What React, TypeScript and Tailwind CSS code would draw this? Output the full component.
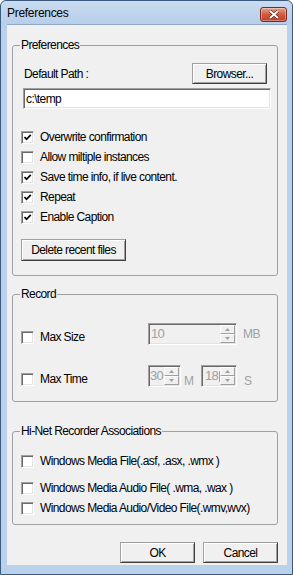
import type { ReactNode } from "react";

function CheckBox({ checked }: { checked?: boolean }) {
  return (
    <span className="w-[13px] h-[13px] shrink-0 flex items-center justify-center bg-white border border-t-[#a0a0a0] border-l-[#a0a0a0] border-r-white border-b-white shadow-[inset_1px_1px_0_#696969,inset_-1px_-1px_0_#e3e3e3]">
      {checked && (
        <svg width="9" height="9" viewBox="0 0 9 9">
          <path d="M1.5 4 L3.5 6.3 L7.8 1.8" stroke="#000" strokeWidth="1.7" fill="none" />
        </svg>
      )}
    </span>
  );
}

function CheckRow({ label, checked, className = "" }: { label: string; checked?: boolean; className?: string }) {
  return (
    <div className={`h-[20px] ml-[8px] flex items-center gap-[6px] ${className}`}>
      <CheckBox checked={checked} />
      <span className="leading-[14px]">{label}</span>
    </div>
  );
}

function Button({ className = "", children }: { className?: string; children: ReactNode }) {
  return (
    <button
      className={`flex items-center justify-center bg-[#f0f0f0] border border-t-[#a0a0a0] border-l-[#a0a0a0] border-r-[#404040] border-b-[#404040] shadow-[inset_1px_1px_0_#fff,inset_-1px_-1px_0_#a0a0a0] leading-[14px] text-black ${className}`}
    >
      {children}
    </button>
  );
}

function SpinArrow({ up }: { up?: boolean }) {
  return (
    <div className="h-[9px] flex items-center justify-center bg-[#f0f0f0] border border-t-white border-l-white border-r-[#a0a0a0] border-b-[#a0a0a0]">
      <svg width="5" height="3" viewBox="0 0 5 3">
        <path d={up ? "M2.5 0 L5 3 L0 3 Z" : "M0 0 L5 0 L2.5 3 Z"} fill="#a0a0a0" />
      </svg>
    </div>
  );
}

function Spin({ className, children }: { className: string; children: ReactNode }) {
  return (
    <div
      className={`h-[22px] flex p-[1px] bg-[#f0f0f0] border border-t-[#a0a0a0] border-l-[#a0a0a0] border-r-white border-b-white shadow-[inset_1px_1px_0_#696969,inset_-1px_-1px_0_#e3e3e3] ${className}`}
    >
      <div className="flex-1 flex items-center text-[13px] leading-[18px] tracking-[-0.8px] text-[#a0a0a0] overflow-hidden">{children}</div>
      <div className="w-[15px] flex flex-col">
        <SpinArrow up />
        <SpinArrow />
      </div>
    </div>
  );
}

function Group({ title, className = "", children }: { title: string; className?: string; children: ReactNode }) {
  return (
    <fieldset className={`w-[266px] border border-[#a0a0a0] rounded-[3px] ${className}`}>
      <legend className="ml-[7px] px-[1px] leading-[14px]">{title}</legend>
      {children}
    </fieldset>
  );
}

export default function App() {
  return (
    <div className="w-[293px] h-[575px] flex flex-col bg-[#b9d1ea] border border-[#3a5a80] rounded-t-[6px] font-['Liberation_Sans',Arial,sans-serif] text-[12px] tracking-[-0.6px] text-black">
      <div className="h-[23px] shrink-0 flex justify-between pl-[6px] pr-[5px] rounded-t-[6px] bg-linear-to-b from-[#cadcf0] to-[#b6cee9]">
        <span className="self-center tracking-[-0.3px] leading-[14px]">Preferences</span>
        <div className="mt-[6px] w-[27px] h-[15px] flex items-center justify-center rounded-[3px] border border-[#7a2b1d] bg-linear-to-b from-[#e8a08e] via-[#d25a40] to-[#bf3f26] shadow-[inset_0_0_0_1px_rgba(255,255,255,0.35)]">
          <svg width="12" height="9" viewBox="0 0 12 9">
            <path d="M2 1 L10 8 M10 1 L2 8" stroke="#5a1a10" strokeWidth="3.2" />
            <path d="M2 1 L10 8 M10 1 L2 8" stroke="#fff" strokeWidth="2" />
          </svg>
        </div>
      </div>

      <div className="flex-1 ml-[6px] mr-[5px] mb-[9px] bg-[#f0f0f0] border-t border-[#8fa8c5] pl-[5px] pt-[13px]">
        <Group title="Preferences">
          <div className="mt-[11px] flex items-center justify-between">
            <span className="pl-[11px] leading-[14px]">Default Path :</span>
            <Button className="w-[75px] h-[21px] mr-[10px]">Browser...</Button>
          </div>
          <div className="mt-[4px] ml-[10px] w-[248px] h-[21px] flex items-center pl-[2px] bg-white border border-t-[#a0a0a0] border-l-[#a0a0a0] border-r-white border-b-white shadow-[inset_1px_1px_0_#696969,inset_-1px_-1px_0_#e3e3e3]">
            c:\temp
          </div>
          <CheckRow className="mt-[18px]" label="Overwrite confirmation" checked />
          <CheckRow label="Allow miltiple instances" />
          <CheckRow label="Save time info, if live content." checked />
          <CheckRow label="Repeat" checked />
          <CheckRow label="Enable Caption" checked />
          <Button className="mt-[12px] mb-[14px] ml-[8px] w-[105px] h-[22px]">Delete recent files</Button>
        </Group>

        <Group title="Record" className="mt-[11px]">
          <div className="mt-[22px] flex items-start">
            <div className="mt-[8px] ml-[8px] w-[127px] flex items-center gap-[6px]">
              <CheckBox />
              <span className="leading-[13px]">Max Size</span>
            </div>
            <Spin className="w-[89px]">
              <span className="pl-[1px]">10</span>
            </Spin>
            <span className="self-center ml-[6px] text-[#a0a0a0] leading-[14px]">MB</span>
          </div>
          <div className="mt-[20px] mb-[14px] flex items-start">
            <div className="mt-[8px] ml-[8px] w-[127px] flex items-center gap-[6px]">
              <CheckBox />
              <span className="leading-[13px]">Max Time</span>
            </div>
            <Spin className="w-[33px]">
              <span>30</span>
            </Spin>
            <span className="w-[20px] self-end pl-[3px] text-[#a0a0a0] leading-[12px]">M</span>
            <Spin className="w-[36px]">
              <span className="pl-[2px]">18</span>
              <span className="ml-[1px] w-[1px] h-[11px] bg-[#a0a0a0]" />
            </Spin>
            <span className="self-end ml-[7px] text-[#a0a0a0] leading-[12px]">S</span>
          </div>
        </Group>

        <Group title="Hi-Net Recorder Associations" className="mt-[22px]">
          <CheckRow className="mt-[13px]" label="Windows Media File(.asf, .asx, .wmx )" />
          <CheckRow className="mt-[7px]" label="Windows Media Audio File( .wma, .wax )" />
          <CheckRow className="mb-[6px]" label="Windows Media Audio/Video File(.wmv,wvx)" />
        </Group>

        <div className="mt-[17px] w-[266px] flex justify-end gap-[8px]">
          <Button className="w-[75px] h-[21px]">OK</Button>
          <Button className="w-[75px] h-[21px]">Cancel</Button>
        </div>
      </div>
    </div>
  );
}
